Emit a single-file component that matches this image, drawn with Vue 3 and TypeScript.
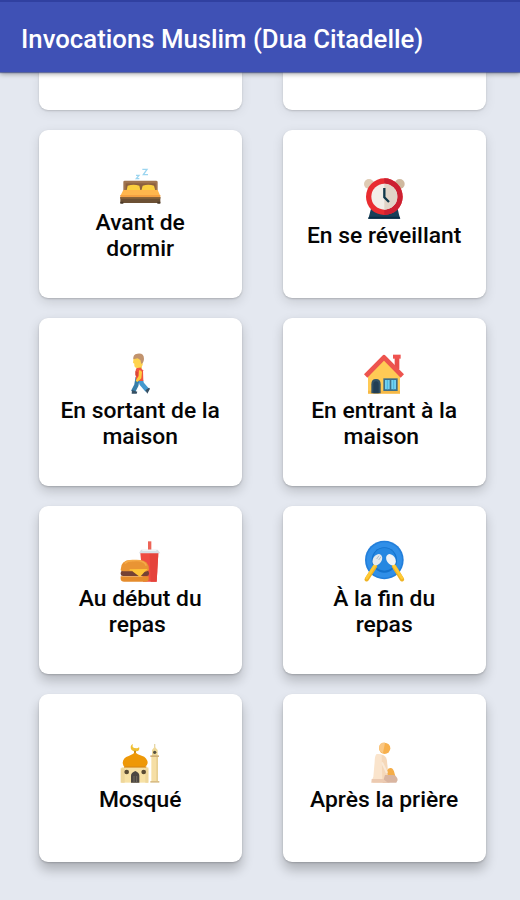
<script setup lang="ts">
type IconName = 'bed' | 'clock' | 'walk' | 'house' | 'meal' | 'plate' | 'mosque' | 'prayer'

interface Category {
  icon: IconName
  lines: string[]
  viewBox: string
  depth: number
}

const title = 'Invocations Muslim (Dua Citadelle)'

const categories: Category[] = [
  { icon: 'bed', lines: ['Avant de', 'dormir'], viewBox: '29 15 123 123', depth: 1 },
  { icon: 'clock', lines: ['En se réveillant'], viewBox: '29 30 123 123', depth: 1 },
  { icon: 'walk', lines: ['En sortant de la', 'maison'], viewBox: '29 24 123 123', depth: 2 },
  { icon: 'house', lines: ['En entrant à la', 'maison\u00a0'], viewBox: '29 24 123 123', depth: 2 },
  { icon: 'meal', lines: ['Au début du', 'repas\u00a0'], viewBox: '29 24 123 123', depth: 3 },
  { icon: 'plate', lines: ['À la fin du', 'repas'], viewBox: '29 24 123 123', depth: 3 },
  { icon: 'mosque', lines: ['Mosqué'], viewBox: '29 21 123 123', depth: 4 },
  { icon: 'prayer', lines: ['Après la prière'], viewBox: '29 21 123 123', depth: 4 },
]
</script>

<template>
  <div class="screen">
    <header class="bar">
      <h1 class="title">{{ title }}</h1>
    </header>
    <main class="grid">
      <div class="card tail depth-0"></div>
      <div class="card tail depth-0"></div>
      <div v-for="c in categories" :key="c.icon" class="card" :class="`depth-${c.depth}`">
        <svg class="icon" :viewBox="c.viewBox" aria-hidden="true">
          <g v-if="c.icon === 'bed'">
            <path d="M96 28h14l-11 16h14M77 46h9l-8 10h9" fill="none" stroke="#9bd5f0" stroke-width="4" />
            <path d="M39 66q0-4 4-4h94q5 0 5 4v34H39z" fill="#a17550" />
            <path d="M46 70h90v20H46z" fill="#8c603f" />
            <path d="M52 77q18-5 35 0l4 18H48zM97 77q17-5 34 0l5 18H92z" fill="#fbcf3f" />
            <path d="M39 90h103l8 18H30z" fill="#ffb64d" />
            <path d="M30 105h120v7H30z" fill="#f5a142" />
            <path d="M30 111h120v18H30z" fill="#6c5034" />
            <path d="M30 111h120v5H30z" fill="#8b6337" />
            <path d="M30 125h9v6h-9zM141 125h9v6h-9z" fill="#493827" />
          </g>
          <g v-else-if="c.icon === 'clock'">
            <circle cx="44" cy="48" r="15" fill="#dfcbb4" />
            <circle cx="136" cy="48" r="15" fill="#cfb99f" />
            <path d="M50 122h80l7 30H42z" fill="#173f59" />
            <path d="M44 146h92l2 6H41z" fill="#082d46" />
            <circle cx="90" cy="86" r="55" fill="#e92c30" />
            <path d="M90 31a55 55 0 0 1 0 110z" fill="#cc2031" />
            <circle cx="90" cy="86" r="39" fill="#f3eee8" />
            <path d="M90 47a39 39 0 0 1 0 78z" fill="#e1d4c7" />
            <path d="M90 60v28l14 14" fill="none" stroke="#12394b" stroke-width="7" />
          </g>
          <g v-else-if="c.icon === 'walk'">
            <path d="M82 97l-4 24-10 19" fill="none" stroke="#377ea9" stroke-width="13" />
            <path d="M89 97l5 19 17 20" fill="none" stroke="#4599ce" stroke-width="14" />
            <path d="M65 135l16 5-2 6H64zM105 136l11-8 3 3-8 15z" fill="#365064" />
            <path d="M80 60h14v12H80z" fill="#edb330" />
            <path d="M80 67q11-2 18 9l1 32H77l-1-33z" fill="#f05540" />
            <path d="M86 76q8-1 9 6l-2 18-12 11-5-4 9-14z" fill="#ffcd3e" />
            <path d="M75 78l8 4-1 14-7-5z" fill="#d84739" />
            <path d="M70 38l27-4v27q-8 10-20 7-6-2-5-12l-4-3z" fill="#ffd34e" />
            <path d="M69 43q-2-15 12-17 20-3 20 16-1 12-8 15l-3-12-8-5z" fill="#c1936e" />
          </g>
          <g v-else-if="c.icon === 'house'">
            <path d="M121 37h14v35h-14z" fill="#e94e4b" />
            <path d="M116 29h23v12h-23z" fill="#ef5350" />
            <path d="M41 89l48-48 48 48v56H41z" fill="#ffca55" />
            <path d="M41 137h96v9H41z" fill="#f6b947" />
            <path d="M34 93l55-56 55 56" fill="none" stroke="#ed544e" stroke-width="14" stroke-linejoin="round" />
            <path d="M51 145v-27q0-16 14-16t14 16v27z" fill="#315165" />
            <path d="M57 145v-26q0-10 8-10t8 10v26z" fill="#213e54" />
            <path d="M87 100h43v38H87z" fill="#3e6e87" />
            <path d="M92 105h14v28H92zM111 105h14v28h-14z" fill="#72d2f2" />
            <path d="M99 105v28M118 105v28" stroke="#4ab5dc" stroke-width="3" />
          </g>
          <g v-else-if="c.icon === 'meal'">
            <path d="M113 25h10v31h-10z" fill="#ed6457" />
            <path d="M90 60h54l-5 86H98z" fill="#ef4c43" />
            <path d="M118 60h26l-5 86h-18z" fill="#e5433c" />
            <path d="M92 50h50l8 11H86z" fill="#d9e0e7" />
            <path d="M96 50h42v4H96z" fill="#f2f4f6" />
            <path d="M31 130h84v8q0 8-9 8H41q-9 0-10-8z" fill="#e58c2c" />
            <rect x="31" y="113" width="85" height="16" rx="7" fill="#754235" />
            <path d="M31 110q0-29 31-29h25q29 0 29 30-8 7-20 4H44q-13 0-13-5z" fill="#e99434" />
            <path d="M43 91q9-9 27-8 31-3 38 15" fill="none" stroke="#f5aa48" stroke-width="5" />
            <path d="M58 109l54-1-9 8-14 16-20-15q-3-5-11-4z" fill="#ffc538" />
          </g>
          <g v-else-if="c.icon === 'plate'">
            <circle cx="90" cy="81" r="58" fill="#237fdb" />
            <circle cx="90" cy="81" r="53" fill="#308fe8" />
            <circle cx="90" cy="81" r="38" fill="#1472cc" />
            <circle cx="90" cy="79" r="34" fill="#2587e1" />
            <path d="M62 100l-25 39" stroke="#efb323" stroke-width="13" stroke-linecap="round" />
            <path d="M119 100l24 39" stroke="#efb323" stroke-width="13" stroke-linecap="round" />
            <path d="M61 98l-24 37M119 98l24 37" stroke="#ffca35" stroke-width="8" stroke-linecap="round" />
            <ellipse cx="69" cy="80" rx="13" ry="18" transform="rotate(34 69 80)" fill="#e4e9ed" />
            <ellipse cx="110" cy="80" rx="13" ry="18" transform="rotate(-34 110 80)" fill="#f0f3f6" />
            <path d="M67 78l7-10M73 81l7-10" stroke="#a3b3bf" stroke-width="2.5" />
          </g>
          <g v-else-if="c.icon === 'mosque'">
            <path d="M68 27q-6 13 11 13 6 0 7-5 4 12-8 14-18 0-17-14 1-6 7-8z" fill="#efbf33" />
            <path d="M71 47h6v16h-6z" fill="#c98a19" />
            <path d="M34 97h80v46H34z" fill="#f7e1a5" />
            <path d="M31 100h12v43H31zM105 100h9v43h-9z" fill="#eed69a" />
            <path d="M44 96h60q7-4 8-12-1-17-18-22-13-3-20-10-6 7-19 11-17 5-18 21 1 9 7 12z" fill="#ee9807" />
            <path d="M41 94h67v4H41z" fill="#d88c16" />
            <path d="M62 143v-21q0-9 13-14 12 5 12 14v21z" fill="#4b4641" />
            <path d="M71 143v-20M79 143v-20" stroke="#716a61" stroke-width="3" />
            <circle cx="49" cy="111" r="7" fill="#5a4b34" />
            <circle cx="100" cy="111" r="7" fill="#5a4b34" />
            <path d="M131 27h4v15h-4z" fill="#e5d6a8" />
            <path d="M125 45l8-10 9 10v20h-17z" fill="#efd999" />
            <circle cx="133" cy="52" r="5" fill="#555142" />
            <path d="M123 65h20v76h-20z" fill="#f6dfa5" />
            <path d="M138 65h5v76h-5z" fill="#e8d092" />
            <path d="M120 61h26v5h-26z" fill="#cfb07a" />
            <path d="M120 138h27v5h-27z" fill="#d9bd86" />
          </g>
          <g v-else>
            <path d="M67 57q20-2 29 11l4 37 7 27-20 11H57q-6-7 0-18l4-45q0-18 6-23z" fill="#fae4cc" />
            <path d="M82 60q12 2 16 17l3 38 5 28H84z" fill="#f5d8b9" />
            <circle cx="91" cy="40" r="17" fill="#f7b04d" />
            <path d="M75 32q5-11 17-9l-6 31q-14-3-11-22z" fill="#fac783" />
            <path d="M99 106q3-8 11-7 8 2 11 17l3 11-23 2z" fill="#f5ad47" />
            <path d="M92 120h26q11 4 12 15l-4 8H85z" fill="#d9b5a0" />
            <path d="M52 132h34l15 11H51z" fill="#eccab1" />
            <path d="M83 82l15 32" stroke="#f9e9d7" stroke-width="6" />
          </g>
        </svg>
        <div class="label">
          <span v-for="line in c.lines" :key="line" class="line">{{ line }}</span>
        </div>
      </div>
    </main>
  </div>
</template>

<style>
body {
  margin: 0;
  background: #e4e8f0;
}
</style>

<style scoped>
.screen {
  display: flex;
  flex-direction: column;
  height: 900px;
  overflow: hidden;
  background: #e4e8f0;
  font-family: Roboto, "Liberation Sans", sans-serif;
}

.bar {
  position: relative;
  z-index: 1;
  display: flex;
  flex: none;
  align-items: center;
  box-sizing: border-box;
  height: 72px;
  padding: 4px 21px 0;
  border-top: 2px solid #3040a0;
  background: #3f51b5;
  box-shadow: 0 1px 1px rgba(40, 55, 130, 0.6), 0 2px 5px rgba(0, 0, 0, 0.35);
}

.title {
  margin: 0;
  color: #fff;
  font-size: 25.75px;
  font-weight: 500;
  line-height: 32px;
  white-space: nowrap;
}

.grid {
  display: grid;
  grid-template-columns: 203px 203px;
  grid-template-rows: 38px repeat(4, 167.3px);
  gap: 20.7px 41px;
  padding-left: 38.7px;
  margin-top: -0.25px;
}

.card {
  display: flex;
  flex-direction: column;
  align-items: center;
  justify-content: center;
  gap: 4px;
  box-sizing: border-box;
  padding-bottom: 0.6px;
  border-radius: 9px;
  background: #fff;
}

.tail {
  border-radius: 0 0 9px 9px;
}

.depth-0 {
  box-shadow: 0 1px 2px rgba(0, 0, 0, 0.16), 0 2px 12px rgba(0, 0, 0, 0.08);
}

.depth-1 {
  box-shadow: 0 1px 2px rgba(0, 0, 0, 0.18), 0 4px 12px rgba(0, 0, 0, 0.12);
}

.depth-2 {
  box-shadow: 0 1px 2px rgba(0, 0, 0, 0.18), 0 5px 12px rgba(0, 0, 0, 0.18);
}

.depth-3 {
  box-shadow: 0 1px 2px rgba(0, 0, 0, 0.18), 0 7px 12px rgba(0, 0, 0, 0.2);
}

.depth-4 {
  box-shadow: 0 1px 2px rgba(0, 0, 0, 0.18), 0 8px 12px rgba(0, 0, 0, 0.23);
}

.icon {
  display: block;
  flex: none;
  width: 41px;
  height: 41px;
  overflow: visible;
}

.label {
  display: flex;
  flex-direction: column;
  align-items: center;
  color: #050505;
  font-size: 22.85px;
  font-weight: 500;
  line-height: 26.5px;
}

.line {
  white-space: nowrap;
}
</style>
